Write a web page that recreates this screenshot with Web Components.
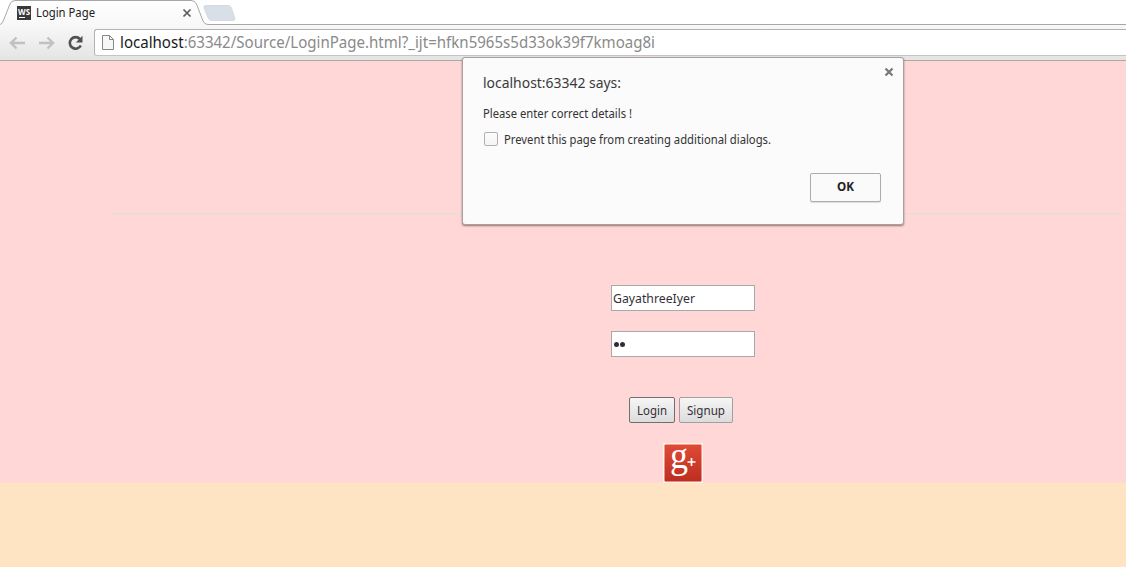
<!DOCTYPE html>
<html lang="en">
<head>
<meta charset="utf-8">
<title>Login Page</title>
<style>
html,body{margin:0;height:100%;overflow:hidden;background:#fee4c3}
body{font-family:"Noto Sans","Open Sans",sans-serif;font-size:12px;color:#222}
</style>
</head>
<body>
<app-window></app-window>
<script>
const define = (name, html, setup) => customElements.define(name, class extends HTMLElement {
  constructor() {
    super();
    const t = document.createElement('template');
    t.innerHTML = html;
    this.attachShadow({mode: 'open'}).append(t.content.cloneNode(true));
  }
  connectedCallback() { if (setup) setup(this); }
});

/* A single line of text condensed to an exact measure */
define('ui-text', `<style>
:host{display:block;white-space:pre;flex:none;line-height:18px}
span{display:inline-block;transform-origin:0 50%}
</style><span><slot></slot></span>`, el => {
  const w = +el.getAttribute('width');
  const s = el.shadowRoot.querySelector('span');
  const natural = s.getBoundingClientRect().width;
  el.style.width = w + 'px';
  if (natural) s.style.transform = 'scaleX(' + w / natural + ')';
});

define('tab-strip', `<style>
:host{display:block;position:relative;height:25px;background:#fff}
.shape{position:absolute;left:0;top:0}
.row{position:relative;display:flex;align-items:center;height:25px;padding-left:17px;box-sizing:border-box}
.fav{width:14px;height:14px;margin-right:5px}
.x{margin-left:87px}
ui-text{font-size:12px;color:#222}
svg{display:block;flex:none}
</style>
<svg class="shape" width="1126" height="25">
<defs><linearGradient id="t" x2="0" y2="1"><stop stop-color="#fff"/><stop offset="1" stop-color="#f8f8f8"/></linearGradient></defs>
<path d="M0 25V24.5Q2 24 3.2 21L10 4Q11.5.5 15 .5H191Q195 .5 196.500 4L203 21Q204.500 24.500 208 24.500H1126V25Z" fill="url(#t)"/>
<path d="M0 24.500Q2 24 3.200 21L10 4Q11.500.5 15 .5H191Q195 .5 196.500 4L203 21Q204.500 24.500 208 24.500H1126" fill="none" stroke="#a7a7a7"/>
<path d="M206 5.500H228Q230.500 5.500 231.500 8L234.800 18Q235.500 20.500 233 20.500H212Q209 20.500 208 18L204 8Q203 5.500 206 5.500Z" fill="#d9dfe7" stroke="#cdd2d9" stroke-width=".7"/>
</svg>
<div class="row">
<svg class="fav" viewBox="0 0 14 14"><rect width="14" height="14" fill="#393939"/><text x="1" y="8.500" textLength="12" lengthAdjust="spacingAndGlyphs" font-family="Open Sans" font-weight="700" font-size="9.500" fill="#fff">WS</text><path d="M2 11.500H8" stroke="#fff"/></svg>
<ui-text width="59">Login Page</ui-text>
<svg class="x" width="10" height="10"><path d="M1.500 1.500L8.500 8.500M8.500 1.500L1.500 8.500" stroke="#5a5a5a" stroke-width="1.700"/></svg>
</div>`);

define('tool-bar', `<style>
:host{display:flex;height:36px;box-sizing:border-box;padding:4px 0 4px 9px;background:linear-gradient(#f8f8f8,#e4e4e4);border-bottom:1px solid #a9a9a9}
svg{display:block;flex:none}
.nav{display:flex;align-items:center;gap:12px;width:85px}
.box{flex:1;display:flex;align-items:center;height:27px;box-sizing:border-box;border:1px solid #b3b3b3;border-bottom-color:#c4c4c4;border-right:0;border-radius:3px 0 0 3px;background:#fff;padding-left:7px}
ui-text{font-size:15.500px;margin:-2px 0 0 6px;color:#8a8a8a;line-height:22px}
b{font-weight:400;color:#1a1a1a}
</style>
<div class="nav">
<svg width="17" height="16"><path d="M7.500 2.500L2 8L7.500 13.500M2 8H16" fill="none" stroke="#c1c1c1" stroke-width="2.400"/></svg>
<svg width="17" height="16"><path d="M9.500 2.500L15 8L9.500 13.500M15 8H1" fill="none" stroke="#c1c1c1" stroke-width="2.400"/></svg>
<svg width="17" height="16"><path d="M13 4.100A5.800 5.800 0 1 0 13.800 10.500" fill="none" stroke="#505050" stroke-width="2.600"/><path d="M15.500.8V7.500H8.800Z" fill="#505050"/></svg>
</div>
<div class="box">
<svg width="12" height="15"><path d="M.5.5H7.500L11.500 4.500V14.500H.5ZM7.500.5V4.500H11.500" fill="#f7f7f7" stroke="#878787"/></svg>
<ui-text width="535"><b>localhost</b>:63342/Source/LoginPage.html?_ijt=hfkn5965s5d33ok39f7kmoag8i</ui-text>
</div>`);

define('text-field', `<style>
:host{display:flex;align-items:center;box-sizing:border-box;width:144px;height:26px;background:#fff;border:1px solid #a9a9a9;padding-left:1px}
</style><slot></slot>`);

define('form-button', `<style>
:host{display:flex;align-items:center;justify-content:center;box-sizing:border-box;height:26px;background:linear-gradient(#f6f6f6,#dcdcdc);border:1px solid var(--edge,#a0a0a0);border-radius:2px}
</style><slot></slot>`);

define('google-plus', `<style>:host{display:block}svg{display:block;overflow:visible}</style>
<svg width="40" height="40"><defs><linearGradient id="r" x2="0" y2="1"><stop stop-color="#df4b37"/><stop offset="1" stop-color="#bd2d20"/></linearGradient></defs>
<rect width="40" height="40" rx="1" fill="#fff0e9"/><rect x="1.500" y="1.500" width="37" height="37" rx="1" fill="url(#r)"/>
<text x="7" y="25" font-family="Liberation Serif" font-size="37" fill="#fff" textLength="18" lengthAdjust="spacingAndGlyphs">g</text>
<path d="M24.500 19H32.500M28.500 15V23" stroke="#fff" stroke-width="1.700"/></svg>`);

define('login-page', `<style>
:host{display:flex;flex-direction:column;align-items:center;height:422px;box-sizing:border-box;background:#ffd7d7;padding-left:240px}
.rule{align-self:stretch;height:2px;margin:152px 0 70px -128px;background:linear-gradient(#ebdddd,#f1dada)}
.gap{height:20px}
.buttons{display:flex;gap:4px;margin:40px 4px 20px 0}
ui-text{font-size:12px;color:#332f38;margin-top:2px}
.dots{display:flex;gap:1px;padding:1px 0 0 1px}
i{width:5px;height:5px;border-radius:50%;background:#332b38}
</style>
<div class="rule"></div>
<text-field><ui-text width="82">GayathreeIyer</ui-text></text-field>
<div class="gap"></div>
<text-field><div class="dots"><i></i><i></i></div></text-field>
<div class="buttons">
<form-button style="width:46px;--edge:#707070"><ui-text width="30">Login</ui-text></form-button>
<form-button style="width:54px"><ui-text width="38">Signup</ui-text></form-button>
</div>
<google-plus></google-plus>`);

define('alert-dialog', `<style>
:host{display:flex;flex-direction:column;box-sizing:border-box;width:442px;height:168px;border:1px solid #a9a0a0;border-radius:3px;background:#fbfbfb;box-shadow:0 1px 2px rgba(70,30,30,.55);padding:9px 22px 22px 20px}
.head{display:flex;justify-content:space-between;height:32px}
.head ui-text{font-size:14.500px;line-height:30px;color:#3a3a3a}
svg{margin-right:-13px}
.msg{font-size:12px;margin-top:6px;color:#333}
.check{display:flex;align-items:center;margin-top:7px;gap:6px;padding-left:1px;font-size:12px;color:#333}
.check ui-text{margin:1px 0 -1px}
.check i{width:14px;height:14px;box-sizing:border-box;border:1px solid #b0b0b0;border-radius:2px;background:linear-gradient(#fdfdfd,#f4f4f4)}
.ok{display:flex;align-items:center;justify-content:center;align-self:flex-end;margin-top:auto;width:71px;height:29px;box-sizing:border-box;border:1px solid #adadad;border-radius:2px;background:#fafafa;box-shadow:0 1px 1px #ddd;font-size:12px;font-weight:700}
.ok ui-text{line-height:27px;margin-top:-2px}
</style>
<div class="head"><ui-text width="138">localhost:63342 says:</ui-text><svg width="10" height="10"><path d="M1.500 1.500L8.500 8.500M8.500 1.500L1.500 8.500" stroke="#777" stroke-width="2.200"/></svg></div>
<ui-text class="msg" width="149">Please enter correct details !</ui-text>
<div class="check"><i></i><ui-text width="267">Prevent this page from creating additional dialogs.</ui-text></div>
<div class="ok"><ui-text width="17">OK</ui-text></div>`);

define('app-window', `<style>
:host{display:block;position:relative;width:1126px;height:567px;overflow:hidden}
alert-dialog{position:absolute;left:462px;top:57px}
</style>
<tab-strip></tab-strip><tool-bar></tool-bar><login-page></login-page><alert-dialog></alert-dialog>`);
</script>
</body>
</html>
